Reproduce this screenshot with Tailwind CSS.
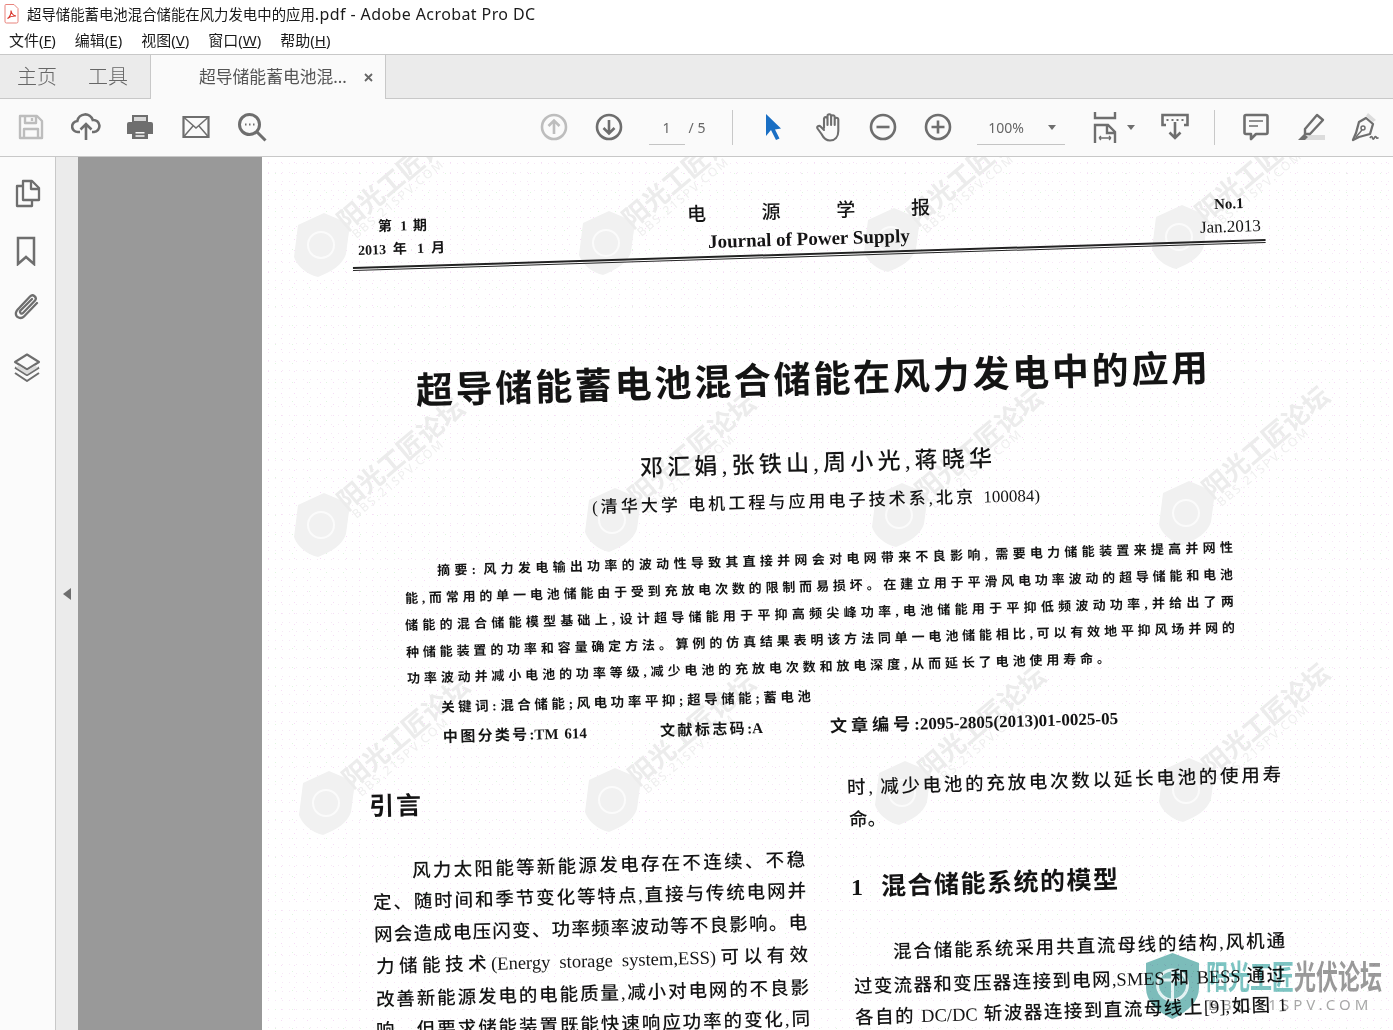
<!DOCTYPE html>
<html lang="zh-CN">
<head>
  <meta charset="UTF-8" />
  <title>超导储能蓄电池混合储能在风力发电中的应用.pdf - Adobe Acrobat Pro DC</title>
  <script src="https://cdn.jsdelivr.net/npm/@tailwindcss/browser@4"></script>
</head>
<body class="relative flex h-[1030px] w-[1393px] flex-col overflow-hidden bg-white font-['Noto_Sans','Noto_Sans_CJK_SC',sans-serif] text-[#1a1a1a]">

  <!-- TITLE BAR -->
  <div class="flex h-[27px] shrink-0 items-center gap-[8px] pl-[4px]">
    <svg width="15" height="20" viewBox="0 0 15 20" fill="none">
      <path d="M1 1.500a1 1 0 0 1 1-1h8l4 4v13a1.500 1.500 0 0 1-1.500 1.500h-10A1.500 1.500 0 0 1 1 18z" fill="#fff" stroke="#e8837c" />
      <path d="M3.500 14.500c2-1 4-5 3.500-8 .5 3 2.500 5 5 5.500-3-.2-6.500.8-8.500 2.500z" stroke="#d9342b" stroke-width="1.100" />
    </svg>
    <span class="whitespace-nowrap text-[14.400px]">超导储能蓄电池混合储能在风力发电中的应用<span class="text-[16px] tracking-[0.4px]">.pdf - Adobe Acrobat Pro DC</span></span>
  </div>

  <!-- MENU BAR -->
  <div class="flex h-[27px] shrink-0 items-center gap-[19px] pl-[9px] text-[15px]">
    <span>文件(<u>F</u>)</span>
    <span>编辑(<u>E</u>)</span>
    <span>视图(<u>V</u>)</span>
    <span>窗口(<u>W</u>)</span>
    <span>帮助(<u>H</u>)</span>
  </div>

  <!-- TABS -->
  <div class="flex h-[45px] shrink-0 border-y border-[#c8c8c8] bg-[#ebebeb] text-[#666]">
    <div class="flex w-[150px] items-center gap-[31px] pl-[17px] text-[20px] font-light">
      <span>主页</span>
      <span>工具</span>
    </div>
    <div class="-mb-px flex w-[236px] items-center border-x border-[#c8c8c8] bg-[#fafafa] pl-[48px] text-[16.800px]">
      <span class="w-[155px] whitespace-nowrap text-[#555]">超导储能蓄电池混...</span>
      <svg class="ml-[10px]" width="9" height="9" viewBox="0 0 9 9" stroke="#666" stroke-width="1.800"><path d="M1 1l7 7M8 1l-7 7" /></svg>
    </div>
  </div>

  <!-- TOOLBAR -->
  <div class="flex h-[58px] shrink-0 items-center border-b border-[#c8c8c8] bg-[#fafafa] pb-[1px] pl-[4px] text-[#666]">
    <div class="flex w-[55px] justify-center">
      <svg width="26" height="26" viewBox="0 0 26 26" fill="none" stroke="#bdbdbd" stroke-width="2.400" stroke-linejoin="round"><path d="M2 2h17l5 5v17H2z" /><path d="M7 2v7h11V2M14 4v3" /><path d="M6 24v-9h14v9" /></svg>
    </div>
    <div class="flex w-[55px] justify-center">
      <svg width="30" height="30" viewBox="0 0 30 30" fill="none" stroke="#6e6e6e" stroke-width="2.600"><path d="M9 20H7a5.500 5.500 0 0 1-.7-11A8 8 0 0 1 21.800 8 6 6 0 0 1 23 20h-2" /><path d="M15 28V12M9.500 17.500 15 12l5.500 5.500" /></svg>
    </div>
    <div class="flex w-[53px] justify-center">
      <svg width="28" height="28" viewBox="0 0 28 28" fill="#6e6e6e"><path d="M6 2h16v7H6z" /><path d="M3 9h22a2 2 0 0 1 2 2v10h-5v-5H6v5H1V11a2 2 0 0 1 2-2z" /><path fill-rule="evenodd" d="M6 16h16v10H6zM9.500 19v1.500h9V19zM9.500 22.300v1.500h9v-1.500z" /><path d="M8 4h12v4H8z" fill="#d8d8d8" /></svg>
    </div>
    <div class="ml-[2px] flex w-[55px] justify-center">
      <svg width="28" height="24" viewBox="0 0 28 24" fill="none" stroke="#6e6e6e" stroke-width="2.200"><path d="M1.500 2h25v20h-25z" /><path d="M1.500 2 14 13 26.500 2M1.500 22l9.500-11M26.500 22 17 11" stroke-width="1.500" /></svg>
    </div>
    <div class="ml-[1px] flex w-[55px] justify-center">
      <svg width="30" height="30" viewBox="0 0 30 30" fill="none" stroke="#6e6e6e" stroke-width="3"><circle cx="12.500" cy="12.500" r="10" /><path d="m19.500 19.500 9 9" /><path d="M8 12.500h1.500M12 12.500h1.500M16 12.500h1.500" stroke-width="2" /></svg>
    </div>

    <div class="ml-[247px] flex w-[55px] justify-center">
      <svg width="28" height="28" viewBox="0 0 28 28" fill="none" stroke="#bdbdbd" stroke-width="2.600"><circle cx="14" cy="14" r="12" /><path d="M14 21V8M8.500 13 14 7.500l5.500 5.500" /></svg>
    </div>
    <div class="flex w-[55px] justify-center">
      <svg width="28" height="28" viewBox="0 0 28 28" fill="none" stroke="#6e6e6e" stroke-width="2.600"><circle cx="14" cy="14" r="12" /><path d="M14 7v13M8.500 15l5.500 5.500 5.500-5.500" /></svg>
    </div>

    <div class="ml-[12px] flex h-[36px] w-[36px] items-center justify-center border-b border-[#c4c4c4] pt-[2px] text-[14px]">1</div>
    <span class="ml-[4px] w-[43px] text-[14px]">/ 5</span>
    <div class="h-[35px] w-px bg-[#c8c8c8]"></div>

    <div class="ml-[13px] flex w-[55px] justify-center">
      <svg width="20" height="28" viewBox="0 0 20 28" fill="#1a6fc4"><path d="M3 1v22l5-6 5 10 3.500-1.500-4.500-9 6-1z" /></svg>
    </div>
    <div class="ml-[2px] flex w-[55px] justify-center">
      <svg width="30" height="30" viewBox="0 0 30 30" fill="none" stroke="#6e6e6e" stroke-width="2.100" stroke-linecap="round" stroke-linejoin="round"><path d="M9 16V6.500a1.800 1.800 0 0 1 3.500 0V13M12.500 13V4a1.800 1.800 0 0 1 3.600 0v9M16.100 13V5a1.800 1.800 0 0 1 3.600 0v8M19.700 13V7.500a1.800 1.800 0 0 1 3.600 0V19c0 6-3.500 9.500-8.300 9.500-4.500 0-6.500-2.500-8.500-6.500L2.500 16.500c-1-2 1.500-3.500 3-2L9 18" /></svg>
    </div>
    <div class="-ml-[2px] flex w-[55px] justify-center">
      <svg width="28" height="28" viewBox="0 0 28 28" fill="none" stroke="#6e6e6e" stroke-width="2.600"><circle cx="14" cy="14" r="12" /><path d="M7.500 14h13" /></svg>
    </div>
    <div class="flex w-[55px] justify-center">
      <svg width="28" height="28" viewBox="0 0 28 28" fill="none" stroke="#6e6e6e" stroke-width="2.600"><circle cx="14" cy="14" r="12" /><path d="M7.500 14h13M14 7.500v13" /></svg>
    </div>

    <div class="ml-[12px] flex h-[36px] w-[88px] items-center justify-between border-b border-[#c4c4c4] pl-[11px] pr-[9px] pt-[2px] text-[14px]">
      <span>100%</span>
      <span class="h-0 w-0 border-x-[4px] border-t-[5px] border-x-transparent border-t-[#6e6e6e]"></span>
    </div>

    <div class="ml-[28px] flex w-[36px] items-center gap-[10px]">
      <svg class="shrink-0" width="24" height="31" viewBox="0 0 24 31" fill="none" stroke="#6e6e6e" stroke-width="2.400"><path d="M2 0v6h20V0" /><path d="M2 31V13h13l7 7v11M14 13v8h8" /><path d="M6 26h12M6 26l2-2M6 26l2 2M18 26l-2-2M18 26l-2 2" stroke-width="1.300" /></svg>
      <span class="h-0 w-0 shrink-0 border-x-[4px] border-t-[5px] border-x-transparent border-t-[#6e6e6e]"></span>
    </div>
    <div class="ml-[18px] flex w-[55px] justify-center">
      <svg width="28" height="28" viewBox="0 0 28 28" fill="none" stroke="#6e6e6e" stroke-width="2.600"><path d="M5 12H1.500V2h25v10H23" /><path d="M5.500 7h2M10.500 7h2M15.500 7h2M20.500 7h2" stroke-width="2" /><path d="M14 9v16M8.500 19.500 14 25l5.500-5.500" /></svg>
    </div>
    <div class="ml-[12px] h-[35px] w-px bg-[#c8c8c8]"></div>
    <div class="ml-[13px] flex w-[55px] justify-center">
      <svg width="26" height="28" viewBox="0 0 26 28" fill="none" stroke="#6e6e6e" stroke-width="2.600" stroke-linejoin="round"><path d="M3 2h20a1.500 1.500 0 0 1 1.500 1.500v16a1.500 1.500 0 0 1-1.500 1.500H13l-5 5v-5H3a1.500 1.500 0 0 1-1.500-1.500v-16A1.500 1.500 0 0 1 3 2z" /><path d="M6 8h14M6 13h9" stroke-width="1.600" /></svg>
    </div>
    <div class="flex w-[55px] justify-center">
      <svg width="30" height="28" viewBox="0 0 30 28" fill="none"><path d="M8 27h21v-5H13z" fill="#dcdcdc" /><path d="M21 2 27 7 14 21H9v-5z" stroke="#6e6e6e" stroke-width="2.400" stroke-linejoin="round" /><path d="m8 21-6 6h7l3-3z" fill="#6e6e6e" /></svg>
    </div>
    <div class="flex w-[55px] justify-center">
      <svg width="30" height="30" viewBox="0 0 30 30" fill="none"><path d="M18 1l8 7-3 2-7-6z" fill="#dcdcdc" /><path d="M16 6l7 6-3 10-11 3-6 3 3-7 3-11z" stroke="#6e6e6e" stroke-width="2.300" stroke-linejoin="round" /><path d="m6 25 6-7" stroke="#6e6e6e" stroke-width="1.500" /><circle cx="13" cy="16" r="2" stroke="#6e6e6e" stroke-width="1.500" /><path d="M20 26c1-2 2-2 2.500 0s1.500 1 2-.5 1.500-1 2 0 1 1 2 0" stroke="#6e6e6e" stroke-width="1.700" /></svg>
    </div>
  </div>

  <!-- MAIN -->
  <div class="flex min-h-0 flex-1">
    <!-- LEFT RAIL -->
    <div class="flex w-[56px] shrink-0 flex-col items-center border-r border-[#c8c8c8] bg-[#fbfbfb] pr-[3px] pt-[22px]">
      <svg class="ml-[4px]" width="26" height="29" viewBox="0 0 26 29" fill="none" stroke="#6e6e6e" stroke-width="2.300" stroke-linejoin="round"><path d="M8 2h9l7 7v12H8z" /><path d="M16 2v8h8" /><path d="M8 7H2v20h15v-6" /></svg>
      <svg class="mt-[28px]" width="20" height="30" viewBox="0 0 20 30" fill="none" stroke="#6e6e6e" stroke-width="2.500"><path d="M2 2h16v26l-8-7-8 7z" /></svg>
      <svg class="mt-[27px]" width="26" height="28" viewBox="0 0 26 28" fill="none" stroke="#6e6e6e" stroke-width="2.300" stroke-linecap="round"><path d="M24 10 11 23.500c-3 3-9 1-8-4 .2-1 .8-2 1.500-2.800L17 3.500c3-3 7.500 1 5 4L10 20c-1.500 1.500-4-.5-2.500-2.500L19 6" /></svg>
      <svg class="ml-[2px] mt-[32px]" width="28" height="30" viewBox="0 0 28 30" fill="none" stroke="#6e6e6e" stroke-width="2.100" stroke-linejoin="round"><path d="M14 1.500 26 9l-12 7.500L2 9z" /><path d="M2 14.500 14 22l12-7.500" /><path d="M2 20l12 8 12-8" /><path d="M6 12.500 14 17.500l8-5 3 2-11 7-11-7z" fill="#dcdcdc" stroke="none" /></svg>
    </div>
    <!-- COLLAPSE STRIP -->
    <div class="flex w-[22px] shrink-0 items-center bg-[#ebebeb] pl-[7px]">
      <span class="h-0 w-0 border-y-[6px] border-r-[8px] border-y-transparent border-r-[#6e6e6e]"></span>
    </div>
    <!-- GRAY DESK -->
    <div class="w-[184px] shrink-0 bg-[#999999]"></div>
    <!-- PDF PAGE -->
    <div class="relative flex-1 overflow-hidden bg-white bg-[radial-gradient(#f6dcf6_0.6px,transparent_0.8px),radial-gradient(#dff6df_0.6px,transparent_0.8px),radial-gradient(#f6e8f6_0.5px,transparent_0.7px)] bg-[size:13px_11px,17px_19px,7px_9px] bg-[position:0_0,5px_7px,3px_2px]">
      <div id="marks"></div>
      <div id="rule" class="absolute h-[4px] origin-left border-y border-t-2 border-y-[#222]"></div>
      <div id="scan"></div>
    </div>
  </div>

  <!-- FORUM STAMP -->
  <div class="absolute left-[1144px] top-[952px] flex items-start gap-[5px] mix-blend-multiply">
    <svg width="57" height="68" viewBox="0 0 57 68" class="shrink-0">
      <path d="M28.500 1 55 11v25c0 14-12 24-26.500 31C14 60 2 50 2 36V11z" fill="#7cbcba" />
      <circle cx="28.500" cy="33" r="15" fill="none" stroke="#e4f3f3" stroke-width="3" />
      <path d="M28.500 20v28M18 28h21" stroke="#e4f3f3" stroke-width="3" />
    </svg>
    <div class="flex flex-col">
      <div class="mt-[2px] flex origin-top scale-y-[1.5] whitespace-nowrap font-['Noto_Sans_CJK_SC',sans-serif] text-[22px] font-bold leading-[26px]">
        <span class="text-[#7cc4c2]">阳光工匠</span><span class="text-[#9a9a9a]">光伏论坛</span>
      </div>
      <div class="ml-[2px] mt-[16px] whitespace-nowrap text-[15px] leading-[16px] tracking-[4px] text-[#a8a8a8]">BBS.21SPV.COM</div>
    </div>
  </div>

  <script>
    // page top-left on screen, scan lines are given in screen coordinates
    const PX = 262, PY = 157;

    // [text, x1, y1, x2, y2, size, bold]
    const lines = [
      ["第 1 期", 378, 227, 427, 226, 14, 1],
      ["2013 年 1 月", 358, 251, 445, 248, 14, 1],
      ["电源学报", 687, 214, 930, 207, 19, 0],
      ["Journal of Power Supply", 708, 241, 908, 235, 19, 1],
      ["No.1", 1214, 204, 1245, 203, 15, 1],
      ["Jan.2013", 1200, 227, 1260, 225, 17, 0],
      ["超导储能蓄电池混合储能在风力发电中的应用", 416, 391, 1208, 368, 37, 1],
      ["邓汇娟,张铁山,周小光,蒋晓华", 640, 468, 992, 458, 23, 0],
      ["(清华大学 电机工程与应用电子技术系,北京 100084)", 592, 507, 1040, 495, 17, 0],
      ["摘要: 风力发电输出功率的波动性导致其直接并网会对电网带来不良影响, 需要电力储能装置来提高并网性", 437, 570, 1233, 547, 13, 1],
      ["能,而常用的单一电池储能由于受到充放电次数的限制而易损坏。在建立用于平滑风电功率波动的超导储能和电池", 405, 598, 1233, 574, 13, 1],
      ["储能的混合储能模型基础上,设计超导储能用于平抑高频尖峰功率,电池储能用于平抑低频波动功率,并给出了两", 405, 625, 1234, 601, 13, 1],
      ["种储能装置的功率和容量确定方法。算例的仿真结果表明该方法同单一电池储能相比,可以有效地平抑风场并网的", 406, 652, 1235, 627, 13, 1],
      ["功率波动并减小电池的功率等级,减少电池的充放电次数和放电深度,从而延长了电池使用寿命。", 407, 678, 1110, 658, 13, 1],
      ["关键词:混合储能;风电功率平抑;超导储能;蓄电池", 441, 708, 811, 697, 13.500, 1],
      ["中图分类号:TM 614", 443, 737, 587, 733, 15, 1],
      ["文献标志码:A", 660, 731, 763, 728, 15, 1],
      ["文章编号:2095-2805(2013)01-0025-05", 830, 726, 1118, 718, 17, 1],
      ["引言", 369, 806, 421, 805, 25, 1],
      ["风力太阳能等新能源发电存在不连续、不稳", 412, 871, 805, 860, 18.500, 0],
      ["定、随时间和季节变化等特点,直接与传统电网并", 373, 903, 806, 891, 18.500, 0],
      ["网会造成电压闪变、功率频率波动等不良影响。电", 374, 935, 807, 923, 18.500, 0],
      ["力储能技术(Energy storage system,ESS)可以有效", 376, 967, 808, 955, 18.500, 0],
      ["改善新能源发电的电能质量,减小对电网的不良影", 376, 1000, 809, 988, 18.500, 0],
      ["响。但要求储能装置既能快速响应功率的变化,同", 376, 1031, 810, 1019, 18.500, 0],
      ["时, 减少电池的充放电次数以延长电池的使用寿", 847, 788, 1281, 775, 18.500, 0],
      ["命。", 849, 820, 886, 819, 18.500, 0],
      ["1", 851, 887, 861, 887, 24, 1],
      ["混合储能系统的模型", 881, 886, 1118, 879, 25, 1],
      ["混合储能系统采用共直流母线的结构,风机通", 893, 952, 1285, 941, 18.500, 0],
      ["过变流器和变压器连接到电网,SMES 和 BESS 通过", 854, 987, 1285, 975, 18.500, 0],
      ["各自的 DC/DC 斩波器连接到直流母线上[9],如图 1", 855, 1018, 1287, 1005, 18.500, 0],
    ];

    // shield positions of the forum watermark
    const marks = [
      [322, 245], [607, 243], [892, 240], [1180, 237],
      [322, 525], [613, 520], [900, 515], [1187, 513],
      [327, 803], [613, 800], [903, 793], [1187, 790],
    ];

    // text-align-last stretches each line to its length in the scan
    document.getElementById("scan").innerHTML = lines.map(([text, x1, y1, x2, y2, size, bold]) => `
      <div class="absolute origin-left whitespace-nowrap text-justify font-['Liberation_Serif','Noto_Sans_CJK_SC',serif] leading-none text-[#141414] [text-align-last:justify]"
        style="left:${x1 - PX}px;top:${y1 - PY - size / 2}px;width:${Math.hypot(x2 - x1, y2 - y1)}px;font-size:${size}px;font-weight:${bold ? 700 : 500};transform:rotate(${Math.atan2(y2 - y1, x2 - x1)}rad)">${text}</div>`).join("");

    const rule = document.getElementById("rule");
    rule.style.left = 353 - PX + "px";
    rule.style.top = 267 - PY + "px";
    rule.style.width = "913px";
    rule.style.transform = "rotate(-1.760deg)";

    document.getElementById("marks").innerHTML = marks.map(([x, y]) => `
      <div class="absolute" style="left:${x - PX - 30}px;top:${y - PY - 33}px">
        <svg width="60" height="66" viewBox="0 0 60 66"><path d="M32 1 58 12 54 42C50 54 38 60 26 65 14 62 5 54 2 45L6 13z" fill="#f1f1f1" /><circle cx="29" cy="33" r="13" fill="none" stroke="#fbfbfb" stroke-width="2" /></svg>
        <div class="absolute left-[48px] top-[-2px] origin-left -rotate-[40deg] whitespace-nowrap font-['Noto_Sans_CJK_SC',sans-serif] text-[26px] font-bold leading-none text-[#ececec]">阳光工匠论坛</div>
        <div class="absolute left-[62px] top-[18px] origin-left -rotate-[40deg] whitespace-nowrap text-[12px] leading-none tracking-[2px] text-[#efefef]">BBS.21SPV.COM</div>
      </div>`).join("");
  </script>
</body>
</html>
